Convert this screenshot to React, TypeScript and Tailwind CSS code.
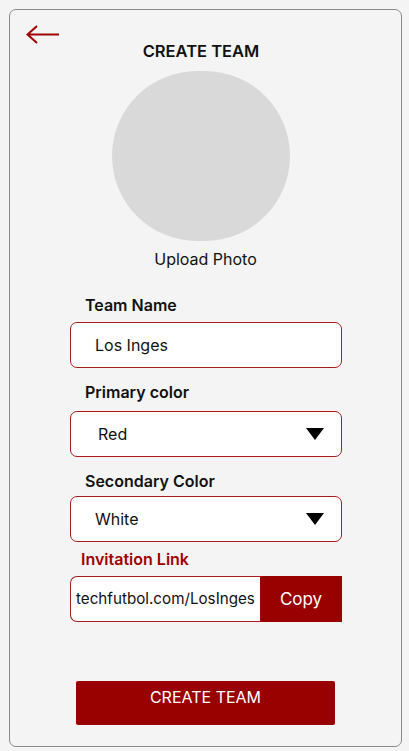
import { useState } from "react";

type SelectFieldProps = {
  label: string;
  value: string;
  textInset: string;
  labelGap: string;
};

function Label({ children, className = "" }: { children: React.ReactNode; className?: string }) {
  return (
    <div className={`pl-[15px] text-[16px] font-semibold leading-[20px] text-[#111] ${className}`}>
      {children}
    </div>
  );
}

function SelectField({ label, value, textInset, labelGap }: SelectFieldProps) {
  return (
    <div className="flex flex-col">
      <Label className={labelGap}>{label}</Label>
      <div className="flex h-[46px] items-center justify-between rounded-[7px] border border-[#a61c1c] bg-white pr-[17px]">
        <span className={`${textInset} text-[16px] text-[#111]`}>{value}</span>
        <svg width="18" height="12" viewBox="0 0 18 12">
          <polygon points="0,0 18,0 9,12" fill="#000" />
        </svg>
      </div>
    </div>
  );
}

export default function App() {
  const [teamName, setTeamName] = useState("Los Inges");

  return (
    <div className="min-h-[751px] w-[409px] bg-[#f4f4f4] pl-[9px] pt-[9px]" style={{ fontFamily: "Inter, 'Noto Sans', sans-serif" }}>
      <div className="flex h-[738px] w-[393px] flex-col rounded-[7px] border border-[#8a8a8a] bg-[#f4f4f4]">
        {/* Back arrow */}
        <div className="pl-[16px] pt-[15px]">
          <svg width="34" height="20" viewBox="0 0 34 20" fill="none">
            <path d="M1 9.5 H33 M11 1 L1.5 9.5 L11 18" stroke="#a00000" strokeWidth="2" />
          </svg>
        </div>

        {/* Title + photo */}
        <div className="mr-[9px] flex flex-col items-center">
          <h1 className="mt-[-4px] text-[16.5px] font-semibold leading-[20px] text-[#111]">CREATE TEAM</h1>
          <div className="mt-[10px] h-[170px] w-[178px] rounded-full bg-[#d9d9d9]" />
        </div>
        <div className="mt-[8px] text-center text-[16px] leading-[20px] text-[#111]">Upload Photo</div>

        {/* Form */}
        <div className="ml-[60px] mr-[59px] mt-[26px] flex flex-col">
          <Label className="mb-[7px]">Team Name</Label>
          <input
            value={teamName}
            onChange={(e) => setTeamName(e.target.value)}
            className="h-[46px] rounded-[7px] border border-[#a61c1c] bg-white pl-[24px] text-[16px] text-[#111] outline-none"
          />

          <div className="mt-[14px]">
            <SelectField label="Primary color" value="Red" textInset="pl-[27px]" labelGap="mb-[9px]" />
          </div>
          <div className="mt-[14px]">
            <SelectField label="Secondary Color" value="White" textInset="pl-[24px]" labelGap="mb-[5px]" />
          </div>

          <div className="mt-[7px] pl-[11px] text-[16px] font-semibold leading-[20px] text-[#a00000]">
            Invitation Link
          </div>
          <div className="mt-[7px] flex h-[46px]">
            <div className="flex min-w-0 flex-1 items-center whitespace-nowrap rounded-l-[7px] border border-r-0 border-[#a61c1c] bg-white pl-[5px] text-[15.2px] text-[#111]">
              techfutbol.com/LosInges
            </div>
            <button className="w-[82px] shrink-0 bg-[#990000] pt-[2px] text-[17px] text-white">Copy</button>
          </div>
        </div>

        <div className="mt-[59px] flex justify-center">
          <button className="h-[44px] w-[259px] rounded-[2px] bg-[#990000] pb-[12px] text-[16px] text-white">
            CREATE TEAM
          </button>
        </div>
      </div>
    </div>
  );
}
